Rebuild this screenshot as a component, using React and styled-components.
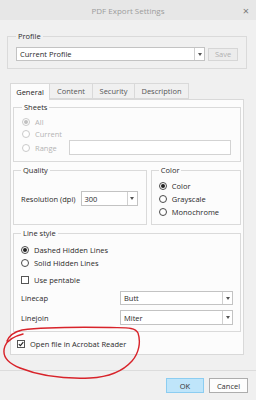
import styled, { createGlobalStyle } from "styled-components";

const Global = createGlobalStyle`
  body { margin: 0; background: #f0f0f0; }
  * { box-sizing: border-box; }
`;

const Dialog = styled.div`
  position: relative;
  width: 256px;
  height: 400px;
  overflow: hidden;
  background: #f0f0f0;
  font-family: "Open Sans", "Noto Sans", sans-serif;
  font-size: 7.5px;
  color: #2a2a2a;
  display: flex;
  flex-direction: column;
`;

const TitleBar = styled.div`
  height: 20px;
  flex: none;
  background: #e7e7e7;
  display: flex;
  align-items: center;
  justify-content: center;
  position: relative;
  color: #9c9c9c;
  font-size: 8px;
`;

const Close = styled.span`
  position: absolute;
  right: 7px;
  top: 3px;
  font-size: 11px;
  color: #7a7a7a;
`;

const Body = styled.div`
  flex: 1;
  display: flex;
  flex-direction: column;
  padding: 0 0 0 7px;
`;

const Group = styled.fieldset`
  margin: ${(p) => p.$mt || 0}px 0 0 0;
  width: ${(p) => (p.$w ? p.$w + "px" : "auto")};
  min-width: 0;
  border: 1px solid #dadada;
  padding: ${(p) => p.$pad || "0 8px"};
  display: flex;
  flex-direction: column;
`;

const Legend = styled.legend`
  padding: 0 2px;
  line-height: 10px;
  height: 10px;
  color: #2a2a2a;
`;

const Row = styled.div`
  display: flex;
  align-items: center;
  gap: ${(p) => p.$gap || 0}px;
  height: ${(p) => (p.$h ? p.$h + "px" : "auto")};
  margin-top: ${(p) => p.$mt || 0}px;
  padding-left: ${(p) => p.$pl || 0}px;
  color: ${(p) => (p.$disabled ? "#b4b4b4" : "inherit")};
`;

const Combo = styled.div`
  width: ${(p) => p.$w}px;
  height: ${(p) => p.$h || 14}px;
  margin-left: ${(p) => (p.$push ? "auto" : (p.$ml || 0) + "px")};
  background: #fff;
  border: 1px solid #c3c3c3;
  display: flex;
  align-items: center;
`;

const ComboText = styled.span`
  flex: 1;
  padding-left: 3px;
  color: #2a2a2a;
`;

const ComboArrow = styled.span`
  width: 10px;
  height: 100%;
  border-left: 1px solid #d0d0d0;
  display: flex;
  align-items: center;
  justify-content: center;
  &::after {
    content: "";
    border-left: 2px solid transparent;
    border-right: 2px solid transparent;
    border-top: 3px solid #555;
  }
`;

const Button = styled.div`
  width: ${(p) => p.$w}px;
  height: ${(p) => p.$h || 15}px;
  display: flex;
  align-items: center;
  justify-content: center;
  border: 1px solid ${(p) => (p.$primary ? "#8ccdf1" : p.$disabled ? "#d6d6d6" : "#adadad")};
  background: ${(p) => (p.$primary ? "#bfe5fa" : p.$disabled ? "#ececec" : "#fdfdfd")};
  color: ${(p) => (p.$disabled ? "#b0b0b0" : "#333")};
`;

const TabBar = styled.div`
  display: flex;
  margin: 14px 0 0 3px;
  height: 16px;
  position: relative;
  z-index: 1;
`;

const Tab = styled.div`
  width: ${(p) => p.$w}px;
  height: ${(p) => (p.$active ? 17 : 16)}px;
  border: 1px solid #d9d9d9;
  border-left: ${(p) => (p.$first ? "1px solid #d9d9d9" : "none")};
  border-bottom: ${(p) => (p.$active ? "none" : "1px solid #d9d9d9")};
  background: ${(p) => (p.$active ? "#fcfcfc" : "#f0f0f0")};
  display: flex;
  align-items: center;
  justify-content: center;
  color: ${(p) => (p.$active ? "#222" : "#555")};
`;

const Panel = styled.div`
  width: 234px;
  height: 256px;
  margin-left: 3px;
  background: #fcfcfc;
  border: 1px solid #d9d9d9;
  padding: 2px 2px 0 2px;
  display: flex;
  flex-direction: column;
`;

const Split = styled.div`
  display: flex;
  gap: 4px;
  margin-top: 3px;
`;

const RadioDot = styled.span`
  width: 8px;
  height: 8px;
  flex: none;
  border-radius: 50%;
  border: 1px solid ${(p) => (p.$disabled ? "#cacaca" : "#4a4a4a")};
  background: #fff;
  display: flex;
  align-items: center;
  justify-content: center;
  &::after {
    content: "";
    display: ${(p) => (p.$on ? "block" : "none")};
    width: 4px;
    height: 4px;
    border-radius: 50%;
    background: ${(p) => (p.$disabled ? "#c0c0c0" : "#222")};
  }
`;

const Box = styled.span`
  width: 8px;
  height: 8px;
  flex: none;
  border: 1px solid #555;
  background: #fff;
  display: flex;
  align-items: center;
  justify-content: center;
`;

const TextField = styled.div`
  width: 162px;
  height: 15px;
  margin-left: auto;
  margin-right: 2px;
  background: #fff;
  border: 1px solid #d3d3d3;
`;

const Footer = styled.div`
  margin-top: 15px;
  margin-left: -7px;
  border-top: 1px solid #dcdcdc;
  flex: 1;
  display: flex;
  justify-content: flex-end;
  align-items: flex-start;
  gap: 5px;
  padding: 7px 8px 0 0;
`;

const Scribble = styled.svg`
  position: absolute;
  left: 0;
  top: 0;
  pointer-events: none;
`;

const Radio = ({ on, disabled, children, h = 13 }) => (
  <Row $h={h} $gap={5} $disabled={disabled}>
    <RadioDot $on={on} $disabled={disabled} />
    {children}
  </Row>
);

const Check = ({ on, children, mt, pl }) => (
  <Row $h={13} $gap={5} $mt={mt} $pl={pl}>
    <Box>
      {on && (
        <svg width="6" height="6" viewBox="0 0 6 6">
          <path d="M0.8 3.1 L2.4 4.7 L5.3 1.2" fill="none" stroke="#222" strokeWidth="1.1" />
        </svg>
      )}
    </Box>
    {children}
  </Row>
);

export default function App() {
  return (
    <>
      <Global />
      <Dialog>
        <TitleBar>
          PDF Export Settings
          <Close>×</Close>
        </TitleBar>
        <Body>
          <Group $mt={11} $w={240} $pad="6px 8px 7px 8px">
            <Legend>Profile</Legend>
            <Row $gap={3}>
              <Combo $w={190}>
                <ComboText>Current Profile</ComboText>
                <ComboArrow />
              </Combo>
              <Button $w={30} $h={13} $disabled>
                Save
              </Button>
            </Row>
          </Group>

          <TabBar>
            <Tab $w={40} $first $active>General</Tab>
            <Tab $w={43}>Content</Tab>
            <Tab $w={42}>Security</Tab>
            <Tab $w={54}>Description</Tab>
          </TabBar>
          <Panel>
            <Group $pad="4px 7px 6px 8px">
              <Legend>Sheets</Legend>
              <Radio on disabled h={12}>All</Radio>
              <Radio disabled h={12}>Current</Radio>
              <Row $h={15} $gap={5} $disabled>
                <RadioDot $disabled />
                Range
                <TextField />
              </Row>
            </Group>

            <Split>
              <Group $w={135} $pad="16px 7px 0 7px">
                <Legend>Quality</Legend>
                <Row>
                  Resolution (dpi)
                  <Combo $w={57} $h={15} $ml={5}>
                    <ComboText>300</ComboText>
                    <ComboArrow />
                  </Combo>
                </Row>
              </Group>
              <Group $w={91} $pad="4px 7px 6px 7px">
                <Legend>Color</Legend>
                <Radio on>Color</Radio>
                <Radio>Grayscale</Radio>
                <Radio>Monochrome</Radio>
              </Group>
            </Split>

            <Group $mt={3} $pad="5px 7px 6px 7px">
              <Legend>Line style</Legend>
              <Radio on>Dashed Hidden Lines</Radio>
              <Radio>Solid Hidden Lines</Radio>
              <Check mt={4}>Use pentable</Check>
              <Row $mt={5} $h={14}>
                Linecap
                <Combo $w={113} $h={14} $push>
                  <ComboText>Butt</ComboText>
                  <ComboArrow />
                </Combo>
              </Row>
              <Row $mt={5} $h={15}>
                Linejoin
                <Combo $w={113} $h={15} $push>
                  <ComboText>Miter</ComboText>
                  <ComboArrow />
                </Combo>
              </Row>
            </Group>

            <Check on mt={5} pl={4}>Open file in Acrobat Reader</Check>
          </Panel>

          <Footer>
            <Button $w={38} $primary>OK</Button>
            <Button $w={39}>Cancel</Button>
          </Footer>
        </Body>

        <Scribble width="256" height="400" viewBox="0 0 256 400">
          <path
            d="M23 334 C15 336 8 339 5 346 C2 354 5 362 20 368 C40 376 65 379 90 378 C110 377 124 370 132 361 C139 353 141 342 138 333 C135 327 126 328 110 327.5 C80 327 45 327 22 330 C14 332 9 336 7 341"
            fill="none"
            stroke="#d8232a"
            strokeWidth="1.4"
            strokeLinecap="round"
          />
        </Scribble>
      </Dialog>
    </>
  );
}
